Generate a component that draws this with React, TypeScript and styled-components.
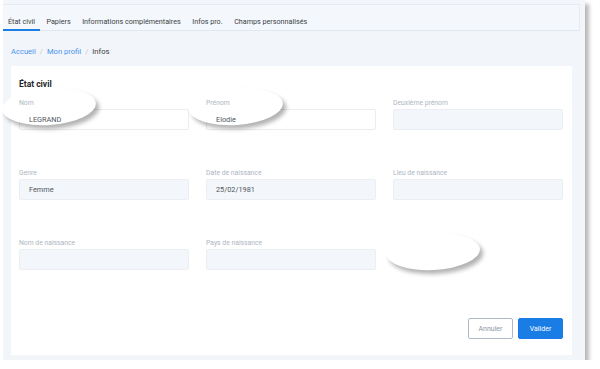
import React from "react";
import styled, { createGlobalStyle } from "styled-components";

const GlobalStyle = createGlobalStyle`
  html, body { margin: 0; padding: 0; background: #ffffff; }
  body { font-family: Roboto, "Noto Sans", Arial, sans-serif; }
  * { box-sizing: border-box; }
`;

const Frame = styled.div`
  position: relative;
  margin-left: 3px;
  width: 582px;
  height: 360px;
  background: #f2f5f9;
  box-shadow: 4px 4px 4px rgba(0, 0, 0, 0.28);
  display: flex;
  flex-direction: column;
`;

const TabBar = styled.div`
  margin-top: 4px;
  width: 577px;
  height: 27px;
  background: #f4f7fb;
  border-top: 1px solid #e8ecf2;
  border-right: 1px solid #e8ecf2;
  border-bottom: 1px solid #e1e7ef;
  display: flex;
  align-items: stretch;
  gap: 1.5px;
`;

const Tab = styled.div<{ $active?: boolean }>`
  padding: 8px 5px 0;
  display: flex;
  align-items: center;
  font-size: 7.2px;
  color: #3a3f46;
  border-bottom: 2px solid ${(p) => (p.$active ? "#1a7de6" : "transparent")};
  margin-bottom: -1px;
  white-space: nowrap;
`;

const Breadcrumb = styled.div`
  margin-top: 14px;
  padding-left: 8px;
  height: 12px;
  display: flex;
  align-items: center;
  font-size: 7.6px;
  gap: 4px;
`;

const Crumb = styled.span<{ $current?: boolean }>`
  color: ${(p) => (p.$current ? "#3a3f46" : "#4a92ef")};
`;

const Sep = styled.span`
  color: #c3cad3;
`;

const Card = styled.div`
  margin: 9px 13px 5px 8px;
  flex: 1;
  background: #ffffff;
  padding: 13px 9px 16px 8px;
  display: flex;
  flex-direction: column;
`;

const Title = styled.div`
  font-size: 8.5px;
  font-weight: 700;
  color: #1f2329;
  line-height: 11px;
  margin-bottom: 8px;
`;

const Grid = styled.div`
  display: grid;
  grid-template-columns: repeat(3, 170px);
  column-gap: 17px;
  row-gap: 38px;
`;

const Field = styled.div`
  display: flex;
  flex-direction: column;
`;

const Label = styled.div`
  position: relative;
  z-index: 2;
  font-size: 6.8px;
  line-height: 10px;
  color: #aeb6bf;
  margin-bottom: 1px;
`;

const Input = styled.div<{ $editable?: boolean }>`
  height: 21px;
  border: 1px solid ${(p) => (p.$editable ? "#e9edf2" : "#ebeff4")};
  background: ${(p) => (p.$editable ? "#ffffff" : "#f3f6fa")};
  border-radius: 2px;
  display: flex;
  align-items: center;
  padding-left: 9px;
`;

const Value = styled.span`
  position: relative;
  z-index: 2;
  font-size: 7.3px;
  color: #50555c;
`;

const Footer = styled.div`
  margin-top: auto;
  display: flex;
  justify-content: flex-end;
  gap: 5px;
`;

const Button = styled.button<{ $primary?: boolean }>`
  width: 45px;
  height: 21px;
  border-radius: 2px;
  font-family: Roboto, Arial, sans-serif;
  font-size: 7px;
  cursor: pointer;
  border: 1px solid ${(p) => (p.$primary ? "#1a7de6" : "#aeb8c6")};
  background: ${(p) => (p.$primary ? "#1a7de6" : "#ffffff")};
  color: ${(p) => (p.$primary ? "#ffffff" : "#8b95a1")};
  padding: 0;
`;

const Blob = styled.div`
  position: absolute;
  z-index: 1;
  background: #ffffff;
  border-radius: 50%;
  box-shadow: 3px 4px 4px rgba(0, 0, 0, 0.3);
  pointer-events: none;
`;

type F = { label: string; value?: string; editable?: boolean };

const fields: F[] = [
  { label: "Nom", value: "LEGRAND", editable: true },
  { label: "Prénom", value: "Elodie", editable: true },
  { label: "Deuxième prénom" },
  { label: "Genre", value: "Femme" },
  { label: "Date de naissance", value: "25/02/1981" },
  { label: "Lieu de naissance" },
  { label: "Nom de naissance" },
  { label: "Pays de naissance" },
];

const tabs = [
  "État civil",
  "Papiers",
  "Informations complémentaires",
  "Infos pro.",
  "Champs personnalisés",
];

const blobs = [
  { left: -1, top: 88, width: 94, height: 37, rot: -4 },
  { left: 186, top: 88, width: 94, height: 37, rot: -4 },
  { left: 383, top: 233, width: 94, height: 37, rot: -3 },
];

export default function App() {
  return (
    <>
      <GlobalStyle />
      <Frame>
        <TabBar>
          {tabs.map((t, i) => (
            <Tab key={t} $active={i === 0}>
              {t}
            </Tab>
          ))}
        </TabBar>
        <Breadcrumb>
          <Crumb>Accueil</Crumb>
          <Sep>/</Sep>
          <Crumb>Mon profil</Crumb>
          <Sep>/</Sep>
          <Crumb $current>Infos</Crumb>
        </Breadcrumb>
        <Card>
          <Title>État civil</Title>
          <Grid>
            {fields.map((f) => (
              <Field key={f.label}>
                <Label>{f.label}</Label>
                <Input $editable={f.editable}>
                  {f.value && <Value>{f.value}</Value>}
                </Input>
              </Field>
            ))}
          </Grid>
          <Footer>
            <Button>Annuler</Button>
            <Button $primary>Valider</Button>
          </Footer>
        </Card>
        {blobs.map((b, i) => (
          <Blob
            key={i}
            style={{
              left: b.left,
              top: b.top,
              width: b.width,
              height: b.height,
              transform: `rotate(${b.rot}deg)`,
            }}
          />
        ))}
      </Frame>
    </>
  );
}
